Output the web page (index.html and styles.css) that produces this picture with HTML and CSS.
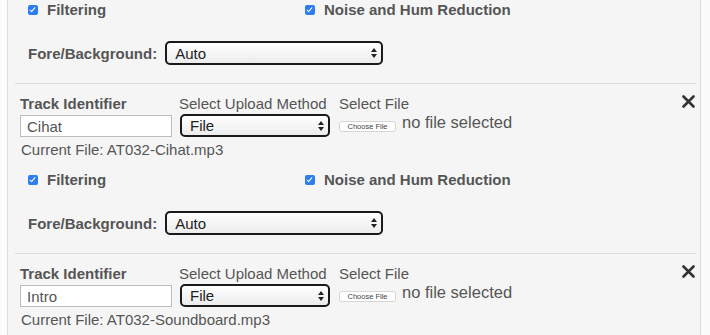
FILE: index.html
```html
<!DOCTYPE html>
<html lang="en">
<head>
  <meta charset="UTF-8" />
  <title>Tracks</title>
  <link rel="stylesheet" href="styles.css">
</head>
<body>
  <div class="tracks">
    <div class="options first">
      <div class="checks">
        <label class="check"><input type="checkbox" checked /> Filtering</label>
        <label class="check"><input type="checkbox" checked /> Noise and Hum Reduction</label>
      </div>
      <div class="fore">
        <span class="fore-label">Fore/Background:</span>
        <div class="select wide">
          <select><option>Auto</option></select>
          <span class="arrows"></span>
        </div>
      </div>
    </div>

    <div class="track">
      <div class="track-head">
        <div class="field f-id">
          <label class="lbl bold">Track Identifier</label>
          <input type="text" class="ident" value="Cihat" />
        </div>
        <div class="field f-method">
          <label class="lbl">Select Upload Method</label>
          <div class="select">
            <select><option>File</option></select>
            <span class="arrows"></span>
          </div>
        </div>
        <div class="field f-file">
          <label class="lbl">Select File</label>
          <div class="file-row">
            <button class="choose">Choose File</button>
            <span class="no-file">no file selected</span>
          </div>
        </div>
        <button class="remove" title="Remove">
          <svg width="13" height="13" viewBox="0 0 13 13"><path d="M1.5 1.5 L11.5 11.5 M11.5 1.5 L1.5 11.5" stroke="#333" stroke-width="2.6" stroke-linecap="round"/></svg>
        </button>
      </div>
      <div class="current">Current File: AT032-Cihat.mp3</div>
      <div class="options">
        <div class="checks">
          <label class="check"><input type="checkbox" checked /> Filtering</label>
          <label class="check"><input type="checkbox" checked /> Noise and Hum Reduction</label>
        </div>
        <div class="fore">
          <span class="fore-label">Fore/Background:</span>
          <div class="select wide">
            <select><option>Auto</option></select>
            <span class="arrows"></span>
          </div>
        </div>
      </div>
    </div>

    <div class="track">
      <div class="track-head">
        <div class="field f-id">
          <label class="lbl bold">Track Identifier</label>
          <input type="text" class="ident" value="Intro" />
        </div>
        <div class="field f-method">
          <label class="lbl">Select Upload Method</label>
          <div class="select">
            <select><option>File</option></select>
            <span class="arrows"></span>
          </div>
        </div>
        <div class="field f-file">
          <label class="lbl">Select File</label>
          <div class="file-row">
            <button class="choose">Choose File</button>
            <span class="no-file">no file selected</span>
          </div>
        </div>
        <button class="remove" title="Remove">
          <svg width="13" height="13" viewBox="0 0 13 13"><path d="M1.5 1.5 L11.5 11.5 M11.5 1.5 L1.5 11.5" stroke="#333" stroke-width="2.6" stroke-linecap="round"/></svg>
        </button>
      </div>
      <div class="current">Current File: AT032-Soundboard.mp3</div>
    </div>
  </div>
</body>
</html>
```

FILE: styles.css
```css
html, body {
  margin: 0;
  height: 335px;
  overflow: hidden;
  background-color: #fbfbfb;
  font-family: "Liberation Sans", Arial, sans-serif;
  font-size: 15px;
  color: #555;
}

.tracks {
  margin-left: 7px;
  width: 694px;
  min-height: 335px;
  background-color: #f5f5f5;
  border-left: 1px solid #dcdcdc;
  border-right: 1px solid #dcdcdc;
  padding: 0 4px 0 7px;
  box-sizing: border-box;
}

.track {
  border-top: 1px solid #dcdcdc;
  padding-left: 5px;
}

.options {
  padding-left: 8px;
  padding-bottom: 18px;
}

.options.first {
  padding-left: 13px;
  padding-top: 1px;
}

.checks {
  display: flex;
  margin-top: 12px;
  line-height: 18px;
}

.options.first .checks {
  margin-top: 0;
}

.check {
  display: flex;
  align-items: center;
  font-weight: bold;
  color: #555;
}

.check:first-child {
  width: 277px;
}

.check input[type="checkbox"] {
  appearance: none;
  width: 10px;
  height: 10px;
  margin: 0 9px 0 0;
  background: #2d7cf0;
  border-radius: 2px;
  position: relative;
}

.check input[type="checkbox"]:checked::after {
  content: "";
  position: absolute;
  left: 3px;
  top: 1px;
  width: 2px;
  height: 5px;
  border: solid #fff;
  border-width: 0 1.5px 1.5px 0;
  transform: rotate(40deg);
}

.fore {
  display: flex;
  align-items: center;
  margin-top: 22px;
}

.fore-label {
  font-weight: bold;
  margin-right: 8px;
}

.select {
  position: relative;
  width: 150px;
  height: 23px;
}

.select.wide {
  width: 218px;
  height: 24px;
}

.select select {
  appearance: none;
  width: 100%;
  height: 100%;
  margin: 0;
  padding: 0 0 0 8px;
  border: 2px solid #1a1a1a;
  border-radius: 5px;
  background: linear-gradient(#ffffff, #ececec);
  font-family: "Liberation Sans", Arial, sans-serif;
  font-size: 15px;
  color: #222;
  box-sizing: border-box;
}

.arrows {
  position: absolute;
  right: 9px;
  top: 50%;
  width: 0;
  height: 0;
  pointer-events: none;
}

.arrows::before,
.arrows::after {
  content: "";
  position: absolute;
  left: -3px;
  border-left: 3px solid transparent;
  border-right: 3px solid transparent;
}

.arrows::before {
  top: -5px;
  border-bottom: 4px solid #222;
}

.arrows::after {
  top: 1px;
  border-top: 4px solid #222;
}

.track-head {
  display: flex;
  align-items: flex-start;
  padding-top: 11px;
}

.field {
  display: flex;
  flex-direction: column;
}

.lbl {
  line-height: 18px;
  color: #555;
}

.lbl.bold {
  font-weight: bold;
}

.f-id {
  width: 159px;
}

.f-method {
  width: 160px;
}

.f-method .select {
  margin: 1px 0 0 1px;
}

.ident {
  width: 152px;
  height: 22px;
  margin: 2px 0 0;
  padding: 0 6px;
  border: 1px solid #bdbdbd;
  background: #fff;
  font-family: "Liberation Sans", Arial, sans-serif;
  font-size: 15px;
  color: #555;
  box-sizing: border-box;
}

.file-row {
  display: flex;
  align-items: flex-start;
}

.choose {
  width: 57px;
  height: 11px;
  margin-top: 8px;
  padding: 0;
  background: #fff;
  border: 1px solid #d6d6d6;
  border-radius: 3px;
  font-family: "Liberation Sans", Arial, sans-serif;
  font-size: 7.5px;
  line-height: 9px;
  color: #444;
}

.no-file {
  margin-left: 6px;
  font-size: 16.5px;
  line-height: 18px;
}

.remove {
  margin: 0 1px 0 auto;
  padding: 0;
  border: none;
  background: none;
  width: 13px;
  height: 13px;
}

.remove svg {
  display: block;
}

.current {
  margin-top: 4px;
  line-height: 18px;
  padding-left: 1px;
}
```
